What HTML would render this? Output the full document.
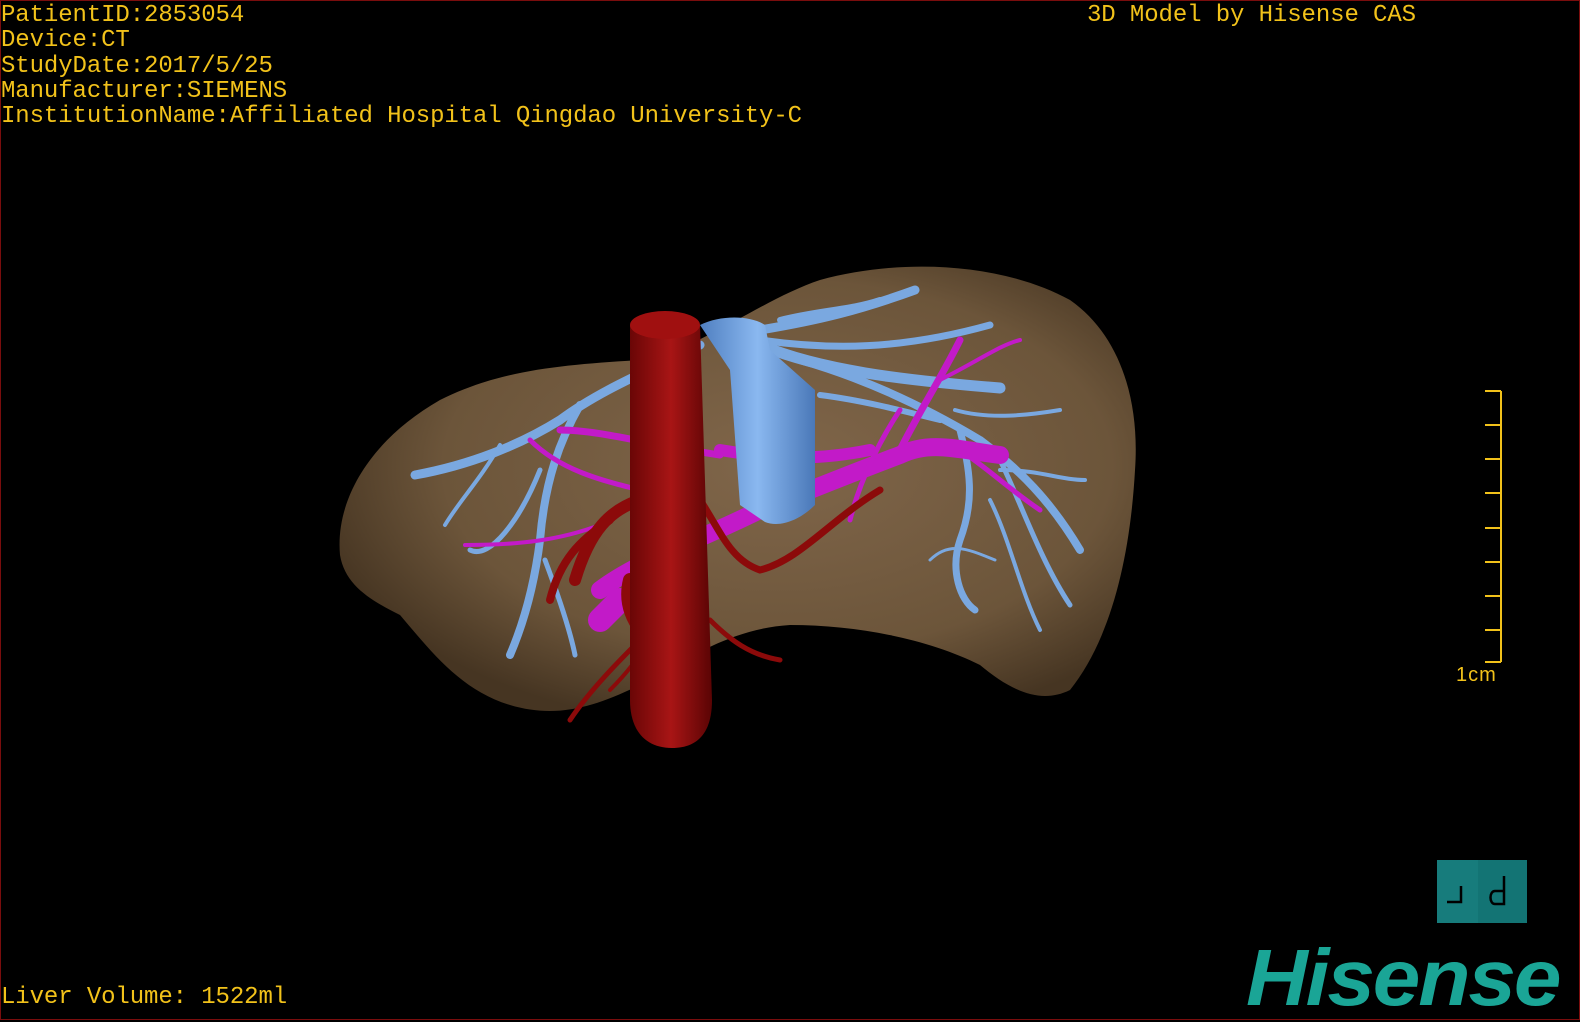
<!DOCTYPE html>
<html><head><meta charset="utf-8"><style>
html,body{margin:0;padding:0;background:#000;}
body{width:1580px;height:1020px;position:relative;overflow:hidden;}
.frame{position:absolute;left:0;top:0;width:1578px;height:1018px;border:1px solid #7a0d0d;}
.t{position:absolute;font-family:"Liberation Mono",monospace;font-size:24px;color:#f2c21a;line-height:25.3px;white-space:pre;letter-spacing:-0.1px;}
</style></head><body>
<svg width="1580" height="1020" style="position:absolute;left:0;top:0">
<defs>
<radialGradient id="lv" cx="0.55" cy="0.45" r="0.6">
<stop offset="0" stop-color="#80664a"/><stop offset="0.7" stop-color="#6c553a"/><stop offset="1" stop-color="#463522"/>
</radialGradient>
<linearGradient id="ivc" x1="0" x2="1"><stop offset="0" stop-color="#6a0606"/><stop offset="0.5" stop-color="#a81515"/><stop offset="1" stop-color="#5a0404"/></linearGradient>
<linearGradient id="bl" x1="0" x2="1"><stop offset="0" stop-color="#4f7fc0"/><stop offset="0.5" stop-color="#8ab8f0"/><stop offset="1" stop-color="#4a78b8"/></linearGradient>
</defs>
<path d="M340,555 C335,500 370,440 440,400 C500,370 560,365 640,360 C700,350 760,300 820,280 C900,258 1000,262 1070,300 C1120,335 1140,400 1135,470 C1130,560 1110,640 1070,690 C1040,705 1010,690 980,665 C930,640 860,625 790,625 C740,628 700,650 650,680 C600,705 560,720 510,705 C460,690 430,650 400,615 C370,600 345,585 340,555 Z" fill="url(#lv)"/>
<g fill="none" stroke="#7aa8e0" stroke-linecap="round">
<path d="M700,345 C650,370 600,390 560,420 C520,445 470,465 415,475" stroke-width="9"/>
<path d="M580,405 C560,440 545,480 540,540 C535,580 525,620 510,655" stroke-width="8"/>
<path d="M540,470 C520,520 490,560 470,550" stroke-width="5"/>
<path d="M545,560 C560,600 570,630 575,655" stroke-width="5"/>
<path d="M500,445 C480,480 460,500 445,525" stroke-width="4"/>
<path d="M760,330 C820,320 860,310 915,290" stroke-width="9"/>
<path d="M760,340 C830,350 900,350 990,325" stroke-width="7"/>
<path d="M760,345 C820,370 900,380 1000,388" stroke-width="11"/>
<path d="M800,360 C870,380 930,410 980,440 C1020,470 1050,500 1080,550" stroke-width="8"/>
<path d="M960,430 C970,470 975,500 960,540 C950,570 960,600 975,610" stroke-width="7"/>
<path d="M1000,460 C1020,500 1040,560 1070,605" stroke-width="5"/>
<path d="M1000,470 C1040,470 1060,480 1085,480" stroke-width="4"/>
<path d="M990,500 C1010,540 1020,590 1040,630" stroke-width="4"/>
<path d="M820,395 C860,400 900,410 940,420" stroke-width="6"/>
<path d="M955,410 C990,420 1030,415 1060,410" stroke-width="4"/>
<path d="M880,300 C850,310 820,310 780,320" stroke-width="6"/>
<path d="M930,560 C950,540 970,550 995,560" stroke-width="3"/>
</g>
<g fill="none" stroke="#c21ac8" stroke-linecap="round">
<path d="M600,590 C640,560 700,540 760,510 C810,490 860,470 900,455 C930,440 960,450 1000,455" stroke-width="18"/>
<path d="M720,450 C780,460 820,460 870,450" stroke-width="12"/>
<path d="M560,430 C600,430 650,445 720,455" stroke-width="7"/>
<path d="M530,440 C560,470 600,480 640,490" stroke-width="5"/>
<path d="M465,545 C520,545 560,540 600,525" stroke-width="4"/>
<path d="M900,450 C920,410 940,380 960,340" stroke-width="7"/>
<path d="M960,450 C990,470 1010,490 1040,510" stroke-width="5"/>
<path d="M900,410 C880,440 860,480 850,520" stroke-width="5"/>
<path d="M940,380 C980,360 1000,345 1020,340" stroke-width="4"/>
<path d="M620,600 C610,610 600,620 600,620" stroke-width="24"/>
</g>
<g fill="none" stroke="#8c0a0a" stroke-linecap="round">
<path d="M640,500 C610,510 590,530 575,580" stroke-width="12"/>
<path d="M610,520 C580,540 560,560 550,600" stroke-width="8"/>
<path d="M700,500 C720,530 730,560 760,570 C800,560 830,520 880,490" stroke-width="7"/>
<path d="M640,640 C620,660 590,690 570,720" stroke-width="5"/>
<path d="M710,620 C730,640 750,655 780,660" stroke-width="5"/>
<path d="M660,620 C640,660 620,680 610,690" stroke-width="4"/>
<path d="M630,580 C625,600 630,620 650,640" stroke-width="14"/>
</g>
<path d="M630,325 L630,700 C630,730 645,748 672,748 C700,748 712,730 712,700 L700,325 Z" fill="url(#ivc)"/>
<ellipse cx="665" cy="325" rx="35" ry="14" fill="#a01010"/>
<path d="M700,325 C720,315 750,315 765,325 L770,350 L815,390 L815,505 C800,520 780,528 765,522 L740,505 L730,370 Z" fill="url(#bl)"/>
</svg>
<div class="frame"></div>
<div class="t" style="left:1px;top:3px">PatientID:2853054
Device:CT
StudyDate:2017/5/25
Manufacturer:SIEMENS
InstitutionName:Affiliated Hospital Qingdao University-C</div>
<div class="t" style="left:1087px;top:3px">3D Model by Hisense CAS</div>
<div class="t" style="left:1px;top:985px">Liver Volume: 1522ml</div>
<svg width="80" height="300" style="position:absolute;left:1450px;top:385px">
<g stroke="#f2c21a" stroke-width="2" fill="none">
<path d="M51,6 V277"/>
<path d="M35,6H51M35,40H51M35,74H51M35,108H51M35,143H51M35,177H51M35,211H51M35,245H51M35,277H51"/>
</g></svg>
<div style="position:absolute;left:1456px;top:664px;font-family:'Liberation Sans',sans-serif;font-size:20px;color:#f2c21a;letter-spacing:1px">1cm</div>
<div style="position:absolute;left:1437px;top:860px;width:90px;height:63px;background:#177c7c">
<div style="position:absolute;left:41px;top:0;width:49px;height:63px;background:#137474"></div>
<svg width="90" height="63" style="position:absolute;left:0;top:0"><g stroke="#000" stroke-width="2.5" fill="none"><path d="M10,42H24V26"/><path d="M67,16V44H58C52,44 52,31 58,31H67"/></g></svg>
</div>
<div style="position:absolute;left:1246px;top:938px;font-family:'Liberation Sans',sans-serif;font-weight:bold;font-style:italic;font-size:80px;line-height:80px;color:#1aa596;letter-spacing:-2px;transform:scaleX(1.07);transform-origin:left top">Hisense</div>
</body></html>
